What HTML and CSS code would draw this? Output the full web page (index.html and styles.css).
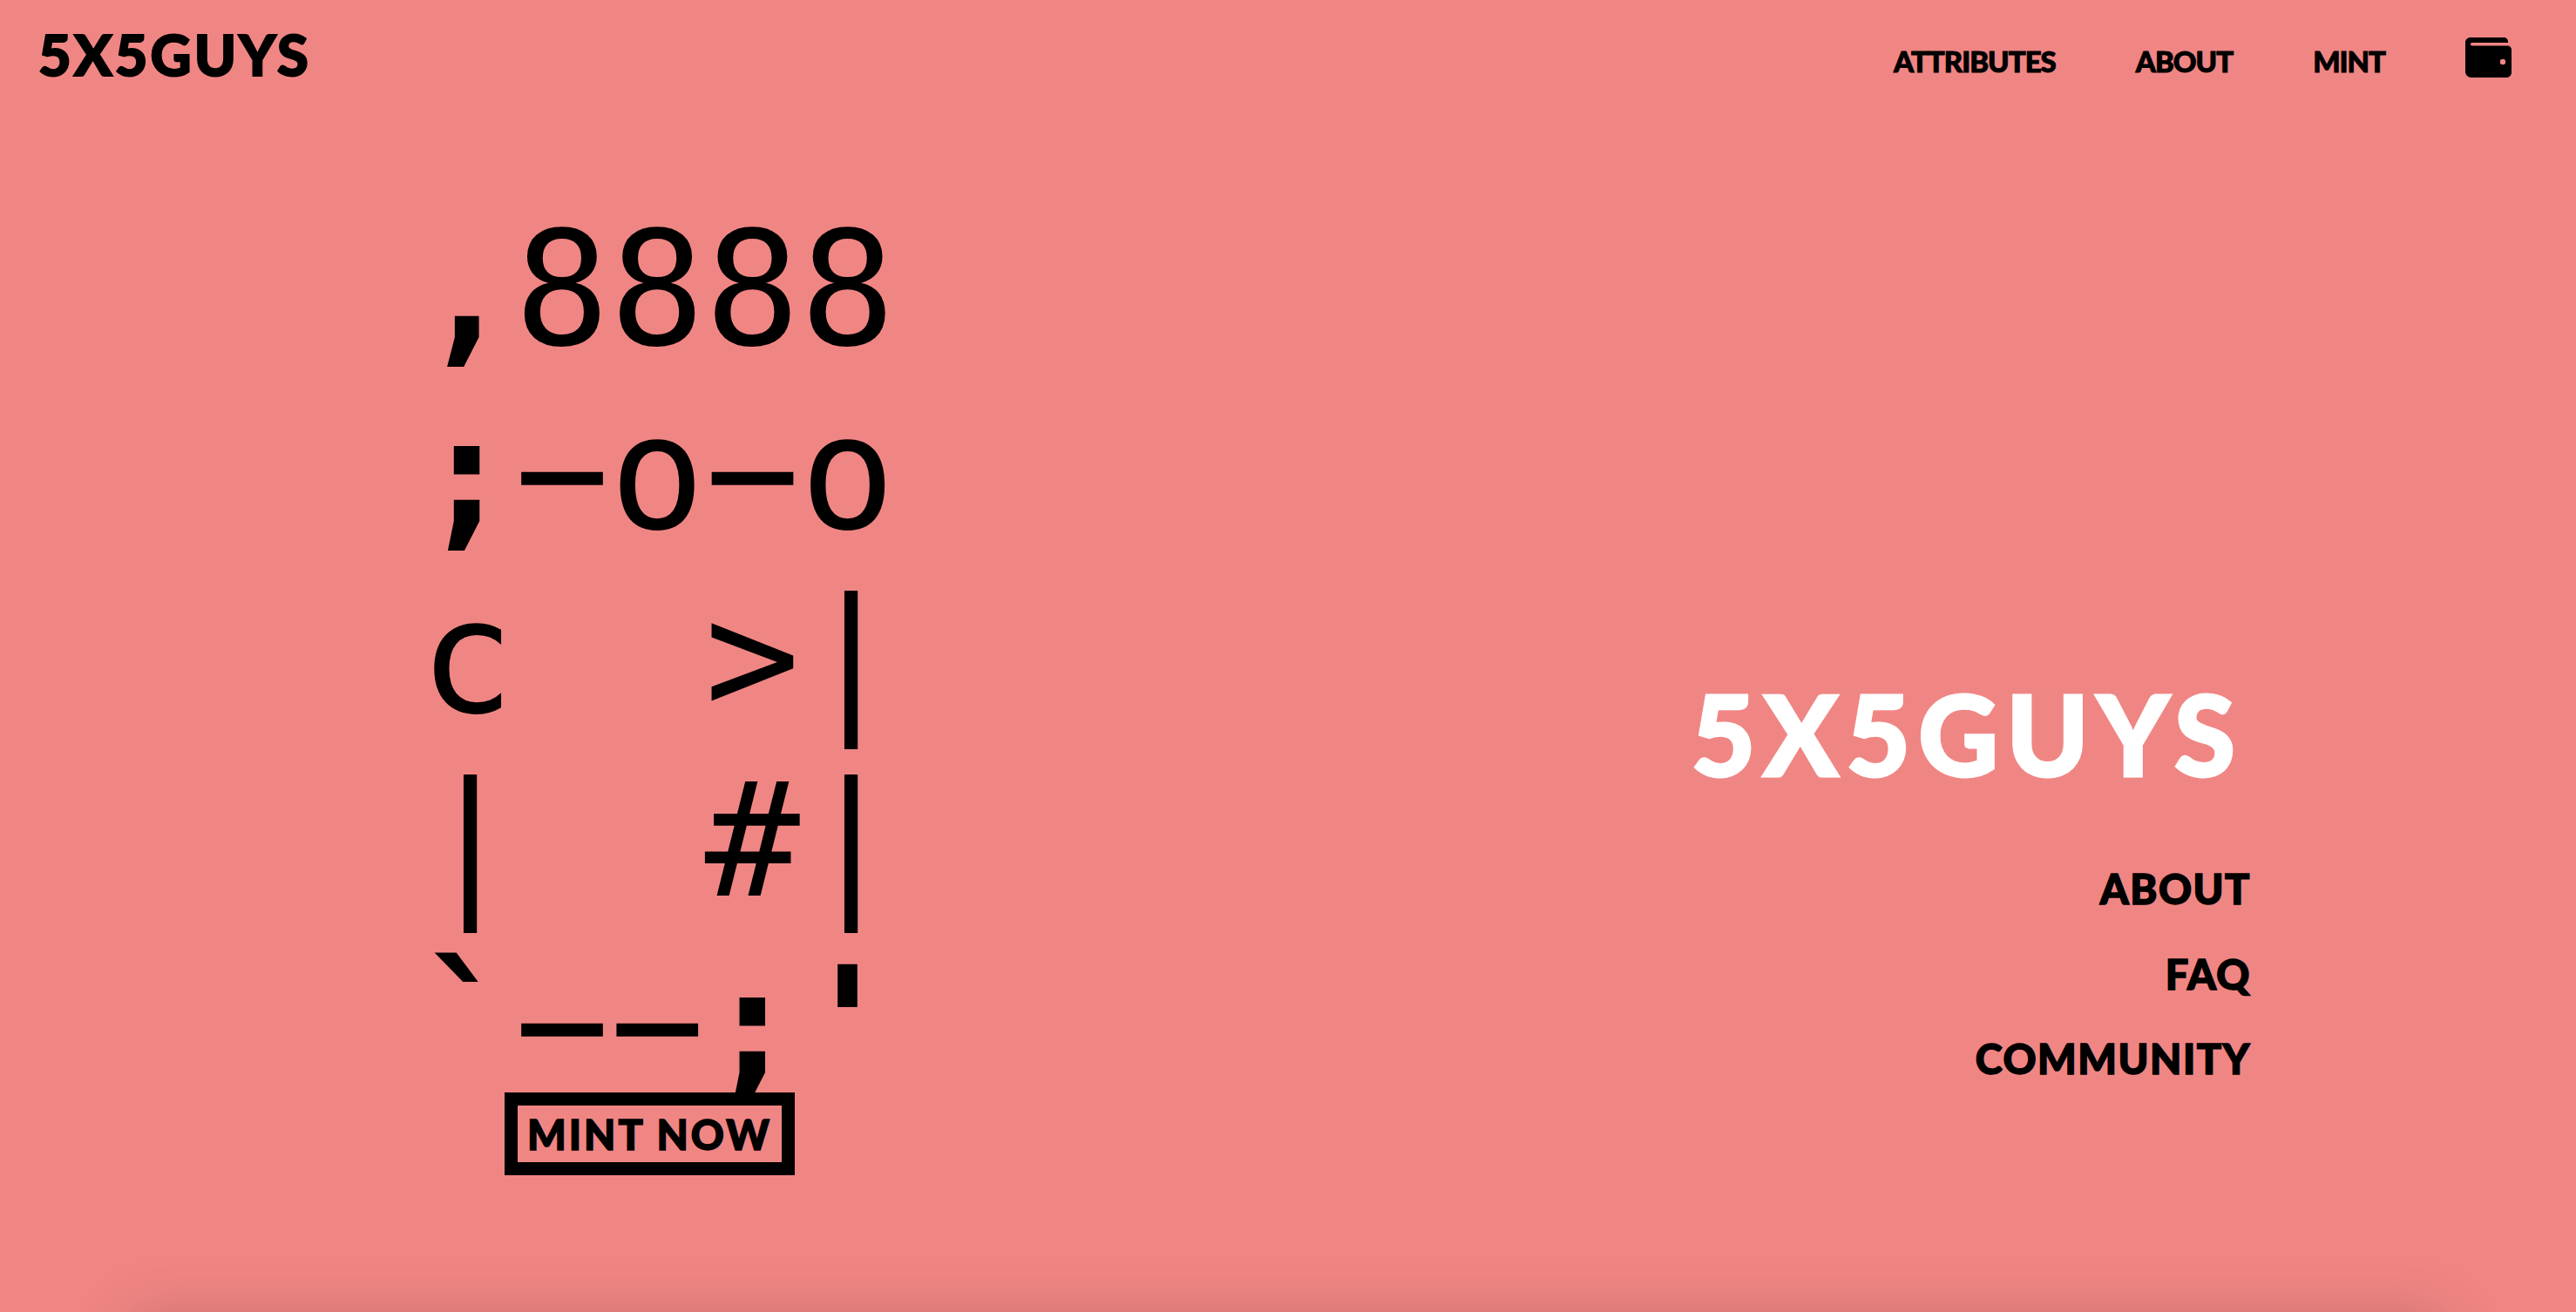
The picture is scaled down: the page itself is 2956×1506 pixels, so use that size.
FILE: index.html
```html
<!DOCTYPE html>
<html lang="en">
<head>
    <meta charset="UTF-8">
    <meta name="viewport" content="width=device-width, initial-scale=1.0">
    <title>5X5GUYS</title>
    <link rel="stylesheet" href="styles.css">
</head>
<body>
    <div class="page">
        <header class="topbar">
            <a class="logo" href="#">5X5GUYS</a>
            <nav class="nav">
                <a href="#">ATTRIBUTES</a>
                <a href="#">ABOUT</a>
                <a href="#">MINT</a>
                <a class="wallet" href="#" aria-label="Wallet">
                    <svg viewBox="0 0 53 46" width="53" height="46">
                        <path d="M6 0H44C47 0 49 2 49 5V6H8C6.500 6 6 6.800 6 7.800C6 8.800 6.500 9.500 8 9.500H48C51 9.500 53 11.500 53 14V40C53 43.500 50.500 46 47 46H7C3 46 0 43 0 39V6C0 2.500 2.500 0 6 0Z" fill="#000"/>
                        <circle cx="43" cy="28" r="3.200" fill="#f08684"/>
                    </svg>
                </a>
            </nav>
        </header>

        <main class="hero">
            <div class="art-col">
                <pre class="art"><b>,</b>8888
<b>;</b>−o−o
c  &gt;<span class="bar">|</span>
<span class="bar">|</span>  #<span class="bar">|</span>
<b>`</b>−−<b>;'</b></pre>
                <a class="mint-btn" href="#">MINT NOW</a>
            </div>
            <div class="side">
                <h1 class="title">5X5GUYS</h1>
                <ul class="links">
                    <li><a href="#">ABOUT</a></li>
                    <li><a href="#">FAQ</a></li>
                    <li><a href="#">COMMUNITY</a></li>
                </ul>
            </div>
        </main>

        <section class="next"></section>
    </div>
</body>
</html>
```

FILE: styles.css
```css
*{
    margin: 0;
    padding: 0;
    box-sizing: border-box;
    list-style-type: none;
}

html,body{
    height: 100%;
    overflow: hidden;
}

body{
    background: #f08684;
    color: #000;
    font-family: "Lato", "Liberation Sans", sans-serif;
    font-weight: 900;
}

a{
    color: inherit;
    text-decoration: none;
}

.page{
    height: 100vh;
    display: flex;
    flex-direction: column;
}

.topbar{
    height: 128px;
    flex: none;
    display: flex;
    justify-content: space-between;
    align-items: flex-start;
    padding: 0 74px 0 44px;
}

.logo{
    margin-top: 23px;
    font-size: 65px;
    line-height: 78px;
    letter-spacing: 3px;
    -webkit-text-stroke: 2px #000;
}

.nav{
    display: flex;
    align-items: flex-start;
    gap: 92px;
    margin-top: 43px;
    font-size: 33px;
    line-height: 30px;
    letter-spacing: -1px;
    -webkit-text-stroke: 1px #000;
}

.nav a{
    display: block;
    margin-top: 12px;
}

.nav .wallet{
    margin-top: 0;
}

.wallet svg{
    display: block;
}

.hero{
    height: 1378px;
    flex: none;
    display: flex;
    justify-content: space-between;
    padding: 0 373px 0 481px;
}

.art-col{
    display: flex;
    flex-direction: column;
    align-items: flex-start;
}

.art{
    margin-top: 99px;
    font-family: "DejaVu Sans Mono", monospace;
    font-weight: 400;
    font-size: 181.500px;
    line-height: 211px;
}

.bar{
    display: inline-block;
    transform: translateX(4px);
}

.mint-btn{
    margin: -28px 0 0 98px;
    width: 333px;
    height: 95px;
    border: 15px solid #000;
    background: #f08684;
    display: flex;
    align-items: center;
    justify-content: center;
    font-size: 47px;
    letter-spacing: 3px;
    -webkit-text-stroke: 1.500px #000;
    position: relative;
}

.side{
    margin-top: 639px;
    display: flex;
    flex-direction: column;
    align-items: flex-end;
}

.title{
    margin-right: 9px;
    color: #fff;
    font-size: 127px;
    line-height: 150px;
    font-weight: 900;
    letter-spacing: 9px;
    -webkit-text-stroke: 3px #fff;
}

.links{
    margin-top: 55px;
    text-align: right;
    font-size: 47px;
    line-height: 97.500px;
    letter-spacing: 1.500px;
    -webkit-text-stroke: 1.500px #000;
}

.next{
    flex: none;
    height: 300px;
    margin: 10px 150px 0;
    box-shadow: 0 0 70px rgba(0,0,0,.2);
}
```
